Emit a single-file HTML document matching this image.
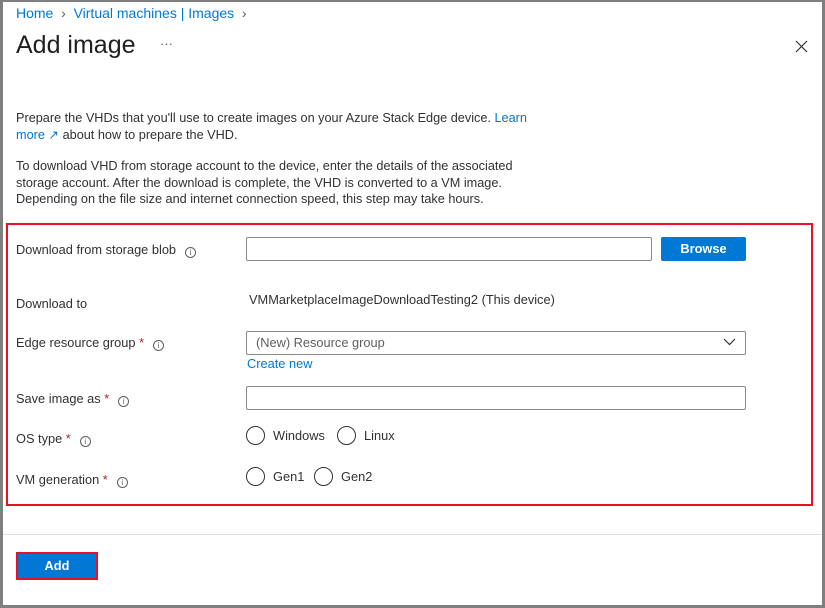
<!DOCTYPE html>
<html><head><style>
*{margin:0;padding:0;box-sizing:border-box}
body{width:825px;height:608px;overflow:hidden;background:#fff;font-family:"Liberation Sans",sans-serif;font-size:12.8px;color:#323130;position:relative}
.a{position:absolute;white-space:nowrap}
.lnk{color:#0078d4}
.inp{position:absolute;border:1px solid #8a8886;border-radius:2px;background:#fff;height:24px}
.info{display:inline-block;width:11px;height:11px;border:1px solid #605e5c;border-radius:50%;font-size:8px;line-height:9px;text-align:center;color:#605e5c;margin-left:9px;vertical-align:-1px}
.req{color:#a4262c}
.rad{position:absolute;width:19px;height:19px;border:1.5px solid #323130;border-radius:50%}
</style></head><body>
<div class="a" style="left:0;top:0;width:825px;height:608px;border-style:solid;border-color:#7f7f7f;border-width:2px 3px 3px 3px"></div>
<div class="a lnk" style="left:16px;top:5px;font-size:14px">Home <span style="color:#605e5c">&nbsp;›&nbsp;</span> Virtual machines | Images <span style="color:#605e5c">&nbsp;›</span></div>
<div class="a" style="left:16px;top:31px;font-size:25px;color:#201f1e">Add image</div>
<div class="a" style="left:160px;top:36px;font-size:13px;color:#605e5c">···</div>
<svg class="a" style="left:795px;top:40px" width="13" height="13"><path d="M1 1L12 12M12 1L1 12" stroke="#323130" stroke-width="1.2"/></svg>
<div class="a" style="left:16px;top:110px;line-height:17px;font-size:12.7px">Prepare the VHDs that you'll use to create images on your Azure Stack Edge device. <span class="lnk">Learn</span><br><span class="lnk">more ↗</span> about how to prepare the VHD.</div>
<div class="a" style="left:16px;top:158px;line-height:16.5px;font-size:12.7px">To download VHD from storage account to the device, enter the details of the associated<br>storage account. After the download is complete, the VHD is converted to a VM image.<br>Depending on the file size and internet connection speed, this step may take hours.</div>
<div class="a" style="left:6px;top:223px;width:807px;height:283px;border:2px solid #e81123"></div>
<div class="a" style="left:16px;top:242px">Download from storage blob<span class="info">i</span></div>
<div class="inp" style="left:246px;top:237px;width:406px"></div>
<div class="a" style="left:661px;top:237px;width:85px;height:24px;background:#0078d4;color:#fff;font-weight:bold;text-align:center;line-height:24px;border-radius:2px">Browse</div>
<div class="a" style="left:16px;top:296px">Download to</div>
<div class="a" style="left:249px;top:292px">VMMarketplaceImageDownloadTesting2 (This device)</div>
<div class="a" style="left:16px;top:335px">Edge resource group <span class="req">*</span><span class="info">i</span></div>
<div class="inp" style="left:246px;top:331px;width:500px"></div>
<div class="a" style="left:256px;top:335px;color:#605e5c">(New) Resource group</div>
<svg class="a" style="left:723px;top:338px" width="13" height="8"><path d="M1 1L6.5 6.5L12 1" stroke="#323130" fill="none" stroke-width="1.2"/></svg>
<div class="a lnk" style="left:247px;top:356px">Create new</div>
<div class="a" style="left:16px;top:391px">Save image as <span class="req">*</span><span class="info">i</span></div>
<div class="inp" style="left:246px;top:386px;width:500px"></div>
<div class="a" style="left:16px;top:431px">OS type <span class="req">*</span><span class="info">i</span></div>
<div class="rad" style="left:246px;top:426px"></div><div class="a" style="left:273px;top:428px">Windows</div>
<div class="rad" style="left:337px;top:426px"></div><div class="a" style="left:364px;top:428px">Linux</div>
<div class="a" style="left:16px;top:472px">VM generation <span class="req">*</span><span class="info">i</span></div>
<div class="rad" style="left:246px;top:467px"></div><div class="a" style="left:273px;top:469px">Gen1</div>
<div class="rad" style="left:314px;top:467px"></div><div class="a" style="left:341px;top:469px">Gen2</div>
<div class="a" style="left:3px;top:534px;width:819px;height:1px;background:#e1dfdd"></div>
<div class="a" style="left:16px;top:552px;width:82px;height:28px;border:2px solid #e81123;background:#0078d4;color:#fff;font-weight:bold;text-align:center;line-height:24px">Add</div>
</body></html>
